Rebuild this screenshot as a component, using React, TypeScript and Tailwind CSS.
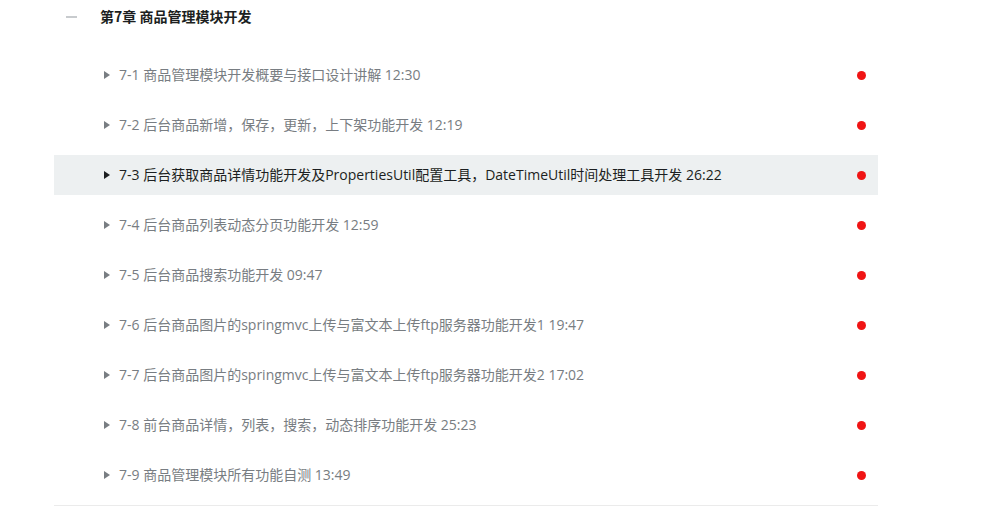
import React from "react";

const items = [
  "7-1 商品管理模块开发概要与接口设计讲解 12:30",
  "7-2 后台商品新增，保存，更新，上下架功能开发 12:19",
  "7-3 后台获取商品详情功能开发及PropertiesUtil配置工具，DateTimeUtil时间处理工具开发 26:22",
  "7-4 后台商品列表动态分页功能开发 12:59",
  "7-5 后台商品搜索功能开发 09:47",
  "7-6 后台商品图片的springmvc上传与富文本上传ftp服务器功能开发1 19:47",
  "7-7 后台商品图片的springmvc上传与富文本上传ftp服务器功能开发2 17:02",
  "7-8 前台商品详情，列表，搜索，动态排序功能开发 25:23",
  "7-9 商品管理模块所有功能自测 13:49",
];

function Tri({ active }: { active: boolean }) {
  return (
    <svg width="6" height="8" viewBox="0 0 6 8" className="shrink-0">
      <path d="M0 0 L6 4 L0 8 Z" fill={active ? "#1c1f21" : "#787d82"} />
    </svg>
  );
}

export default function App() {
  return (
    <div
      className="w-[998px] h-[509px] bg-white overflow-hidden"
      style={{ fontFamily: '"Open Sans", "Noto Sans CJK SC", sans-serif' }}
    >
      <div className="ml-[54px] w-[824px] border-b border-[#ebebeb]">
        <div className="h-8 flex items-center pl-3">
          <div className="w-[11px] h-[2px] bg-[#c8cbce] mt-[2px]" />
          <div
            className="ml-[23px] text-[14px] font-bold text-[#1c1f21] leading-none"
            style={{ fontFamily: '"Noto Sans CJK SC", sans-serif' }}
          >
            第7章 商品管理模块开发
          </div>
        </div>
        <div className="mt-[23px] flex flex-col">
          {items.map((t, i) => {
            const active = i === 2;
            return (
              <div
                key={i}
                className={`h-10 mb-[10px] flex items-center pl-[50px] pr-3 ${
                  active ? "bg-[#edf0f1]" : ""
                }`}
              >
                <Tri active={active} />
                <span
                  className={`ml-[9px] text-[14px] leading-none flex-1 -mt-[1px] ${
                    active ? "text-[#1c1f21]" : "text-[#787d82]"
                  }`}
                >
                  {t}
                </span>
                <div className="w-[9px] h-[9px] rounded-full bg-[#f01414] shrink-0" />
              </div>
            );
          })}
        </div>
      </div>
    </div>
  );
}
